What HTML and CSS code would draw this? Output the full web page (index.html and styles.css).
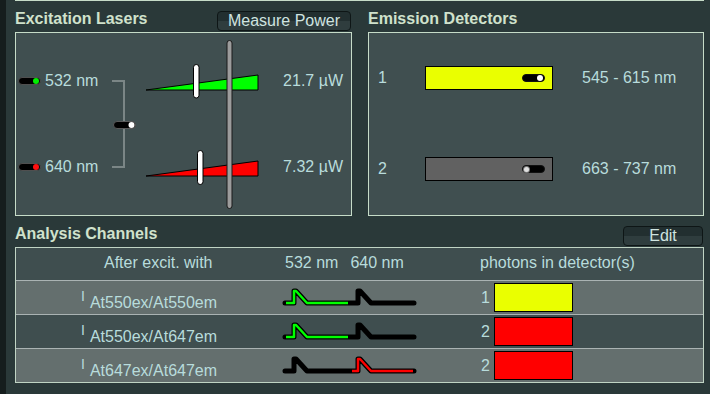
FILE: index.html
```html
<!DOCTYPE html>
<html lang="en">
<head>
  <meta charset="UTF-8" />
  <meta name="viewport" content="width=device-width, initial-scale=1.0"/>
  <title>Laser Setup</title>
  <link rel="stylesheet" href="styles.css">
</head>
<body>
  <div class="app">
    <div class="top-rule"></div>

    <div class="setup">
      <!-- Excitation Lasers -->
      <section class="column column-left">
        <div class="heading">
          <h2>Excitation Lasers</h2>
          <button class="btn btn-measure">Measure Power</button>
        </div>
        <div class="panel lasers">
          <div class="laser-labels">
            <div class="laser-row"><span class="toggle green"></span>532 nm</div>
            <div class="laser-row"><span class="toggle red"></span>640 nm</div>
          </div>
          <svg class="laser-art" width="165" height="182" viewBox="0 0 165 182">
            <polyline points="12,48 24,48 24,134 12,134" fill="none" stroke="#7b8686" stroke-width="2"/>
            <rect x="13.5" y="88.5" width="22" height="7" rx="3.5" fill="#000" stroke="#5a5a5a"/>
            <circle cx="31.5" cy="92" r="3" fill="#fff"/>
            <polygon points="46,57 158,42 158,57" fill="#00ff00" stroke="#000"/>
            <polygon points="46,143 158,128 158,143" fill="#ff0000" stroke="#000"/>
            <rect x="93.5" y="31.5" width="5.5" height="33.5" rx="2.75" fill="#fff" stroke="#000"/>
            <rect x="97.5" y="117.5" width="5.5" height="34" rx="2.75" fill="#fff" stroke="#000"/>
            <rect x="127" y="7.5" width="5" height="168" rx="2.5" fill="#9c9c9c" stroke="#1a1a1a"/>
          </svg>
          <div class="laser-values">
            <div class="laser-row">21.7 µW</div>
            <div class="laser-row">7.32 µW</div>
          </div>
        </div>
      </section>

      <!-- Emission Detectors -->
      <section class="column column-right">
        <div class="heading">
          <h2>Emission Detectors</h2>
        </div>
        <div class="panel detectors">
          <div class="det-row">
            <span class="det-num">1</span>
            <div class="det-bar yellow"><span class="toggle white"></span></div>
            <span class="det-range">545 - 615 nm</span>
          </div>
          <div class="det-row">
            <span class="det-num">2</span>
            <div class="det-bar gray"><span class="toggle off"></span></div>
            <span class="det-range">663 - 737 nm</span>
          </div>
        </div>
      </section>
    </div>

    <!-- Analysis Channels -->
    <div class="heading">
      <h2>Analysis Channels</h2>
      <button class="btn btn-edit">Edit</button>
    </div>
    <div class="channels">
      <div class="ch-row ch-head">
        <div class="ch-name">After excit. with</div>
        <div class="ch-pulse"><span>532 nm</span><span class="second">640 nm</span></div>
        <div class="ch-det">photons in detector(s)</div>
      </div>

      <div class="ch-row light">
        <div class="ch-name"><span class="mark">I</span>At550ex/At550em</div>
        <div class="ch-pulse">
          <svg width="140" height="33" viewBox="0 0 140 33">
            <path class="pulse-out" d="M5,22 H14 V10 H16 L27,22 H70 H78 V10 H80 L91,22 H134"/>
            <path class="pulse-in green" d="M6,22 H14 V10 H16 L27,22 H68"/>
          </svg>
        </div>
        <div class="ch-det"><span class="num">1</span><span class="swatch yellow"></span></div>
      </div>

      <div class="ch-row">
        <div class="ch-name"><span class="mark">I</span>At550ex/At647em</div>
        <div class="ch-pulse">
          <svg width="140" height="33" viewBox="0 0 140 33">
            <path class="pulse-out" d="M5,22 H14 V10 H16 L27,22 H70 H78 V10 H80 L91,22 H134"/>
            <path class="pulse-in green" d="M6,22 H14 V10 H16 L27,22 H68"/>
          </svg>
        </div>
        <div class="ch-det"><span class="num">2</span><span class="swatch red"></span></div>
      </div>

      <div class="ch-row light">
        <div class="ch-name"><span class="mark">I</span>At647ex/At647em</div>
        <div class="ch-pulse">
          <svg width="140" height="33" viewBox="0 0 140 33">
            <path class="pulse-out" d="M5,22 H14 V10 H16 L27,22 H70 H78 V10 H80 L91,22 H134"/>
            <path class="pulse-in red" d="M72,22 H78 V10 H80 L91,22 H133"/>
          </svg>
        </div>
        <div class="ch-det"><span class="num">2</span><span class="swatch red"></span></div>
      </div>
    </div>
  </div>
</body>
</html>
```

FILE: styles.css
```css
body {
  margin: 0;
  background: #2a3939;
  font-family: "Liberation Sans", Arial, sans-serif;
  font-size: 16px;
  color: #b8dcdc;
}

.app {
  width: 710px;
  height: 394px;
  box-sizing: border-box;
  border-left: 6px solid #151d1d;
  padding-left: 9px;
}

.top-rule {
  width: 689px;
  height: 1px;
  background: #c6dcc8;
}

.setup {
  display: flex;
  gap: 16px;
  width: 689px;
}

.column-left {
  width: 337px;
}

.column-right {
  flex: 1;
}

.heading {
  display: flex;
  justify-content: space-between;
  align-items: flex-start;
  height: 31px;
  width: 689px;
}

.column .heading {
  width: auto;
}

h2 {
  margin: 0;
  padding-top: 9px;
  font-size: 16px;
  line-height: 18px;
  font-weight: bold;
  color: #d0e2cc;
}

.btn {
  margin-top: 10px;
  height: 20px;
  box-sizing: border-box;
  padding: 0;
  border: 1px solid #0e1616;
  border-radius: 4px;
  background: linear-gradient(#222f30 50%, #2f3d3e 50%);
  color: #cfe4e0;
  font-family: inherit;
  font-size: 16px;
  line-height: 18px;
  text-align: center;
  cursor: pointer;
}

.btn-measure {
  width: 134px;
  margin-right: 1px;
}

.btn-edit {
  width: 80px;
  margin-right: 1px;
}

.panel {
  height: 184px;
  box-sizing: border-box;
  border: 1px solid #c6dcc8;
  background: #404f50;
}

/* lasers */
.lasers {
  display: flex;
}

.laser-labels {
  width: 84px;
  padding-top: 39px;
  display: flex;
  flex-direction: column;
  gap: 68px;
}

.laser-row {
  height: 18px;
  line-height: 18px;
  display: flex;
  align-items: center;
}

.laser-labels .toggle {
  margin: 0 4px 0 2px;
}

.laser-art {
  display: block;
  flex-shrink: 0;
}

.laser-values {
  flex: 1;
  padding: 39px 8px 0 0;
  display: flex;
  flex-direction: column;
  align-items: flex-end;
  gap: 68px;
}

/* toggles */
.toggle {
  width: 23px;
  height: 8px;
  box-sizing: border-box;
  padding: 0 1px;
  border: 1px solid #4f4f4f;
  border-radius: 4px;
  background: #000;
  display: inline-flex;
  align-items: center;
  justify-content: flex-end;
  flex-shrink: 0;
}

.toggle::after {
  content: "";
  width: 6px;
  height: 6px;
  border-radius: 50%;
  background: #fff;
}

.toggle.green::after { background: #00ee00; }
.toggle.red::after { background: #ff1010; }

.toggle.white {
  border-color: #111;
}

.toggle.off {
  justify-content: flex-start;
  border-color: #111;
}

.toggle.off::after {
  width: 5px;
  height: 5px;
  background: #e0e0e0;
  box-shadow: 0 0 0 1px #777;
}

/* detectors */
.detectors {
  padding: 33px 0 0 9px;
  display: flex;
  flex-direction: column;
  gap: 67px;
}

.det-row {
  height: 24px;
  line-height: 18px;
  display: flex;
  align-items: center;
}

.det-num {
  width: 47px;
}

.det-bar {
  width: 128px;
  height: 24px;
  box-sizing: border-box;
  border: 1px solid #000;
  padding-right: 7px;
  display: flex;
  align-items: center;
  justify-content: flex-end;
}

.det-bar.yellow { background: #eaff00; }
.det-bar.gray { background: #616161; }

.det-range {
  margin-left: 29px;
}

/* analysis channels */
.channels {
  width: 689px;
  box-sizing: border-box;
  border: 1px solid #c0d4c4;
}

.ch-row {
  display: grid;
  grid-template-columns: 264px 140px 1fr;
  height: 33px;
  border-top: 1px solid #aab3b3;
  background: #3f4e4f;
}

.ch-row.light {
  background: #646f6e;
}

.ch-name {
  padding: 14px 0 0 65px;
  line-height: 16px;
  white-space: nowrap;
}

.ch-head {
  height: 30px;
  padding-bottom: 2px;
  border-top: none;
  align-items: center;
  line-height: 18px;
}

.ch-head .ch-name {
  padding: 0 0 0 88px;
  line-height: 18px;
}

.ch-head .ch-pulse {
  padding-left: 5px;
}

.ch-head .second {
  margin-left: 12px;
}

.ch-head .ch-det {
  padding-left: 60px;
}

.mark {
  font-size: 14px;
  line-height: 0;
  vertical-align: 7px;
  margin-right: 5px;
}

.ch-pulse svg {
  display: block;
}

.pulse-out {
  fill: none;
  stroke: #000;
  stroke-width: 5;
  stroke-linecap: round;
  stroke-linejoin: round;
}

.pulse-in {
  fill: none;
  stroke-width: 2.5;
  stroke-linejoin: round;
}

.pulse-in.green { stroke: #00ff00; }
.pulse-in.red { stroke: #ff0000; }

.ch-row:not(.ch-head) .ch-det {
  padding-left: 61px;
  display: flex;
  align-items: center;
}

.num {
  width: 13px;
  line-height: 18px;
}

.swatch {
  width: 79px;
  height: 29px;
  box-sizing: border-box;
  border: 1px solid #000;
}

.swatch.yellow { background: #eaff00; }
.swatch.red { background: #ff0000; }
```
